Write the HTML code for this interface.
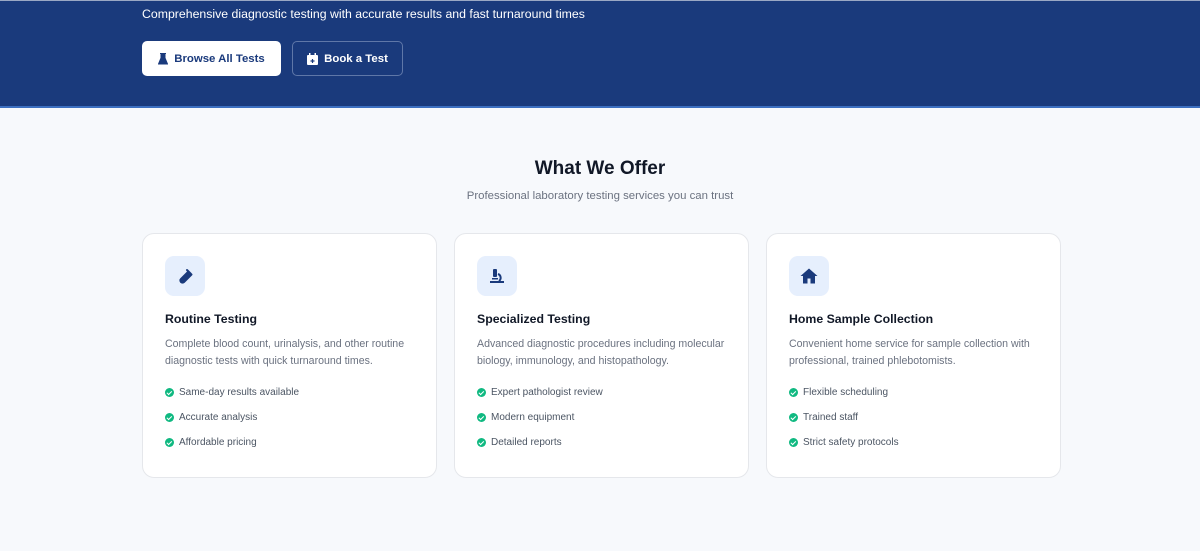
<!DOCTYPE html>
<html><head><meta charset="utf-8"><style>
*{margin:0;padding:0;box-sizing:border-box}
body{width:1200px;height:551px;overflow:hidden;background:#f7f9fc;font-family:"Liberation Sans",sans-serif}
.hero{position:absolute;left:0;top:0;width:1200px;height:108px;background:#1a3a7c;border-top:1px solid #9aa8c4;border-bottom:2px solid #3c6fc0}
.hero p{position:absolute;left:142px;top:6px;color:#fff;font-size:12.3px}
.btn{position:absolute;top:40px;height:35px;border-radius:5px;font-size:11.4px;font-weight:bold;display:flex;align-items:center;justify-content:center;gap:6px}
.b1{left:142px;width:139px;background:#fff;color:#1a3a7c}
.b2{left:292px;width:111px;border:1.5px solid #5f77a8;color:#fff}
h2{position:absolute;top:158px;width:1200px;text-align:center;font-size:19px;color:#111827}
.sub{position:absolute;top:190px;width:1200px;text-align:center;font-size:11.4px;color:#6b7280}
.card{position:absolute;top:233px;width:295px;height:245px;background:#fff;border:1px solid #e5e7eb;border-radius:12px}
.ic{position:absolute;left:22px;top:22px;width:40px;height:40px;border-radius:9px;background:#e6effd;display:flex;align-items:center;justify-content:center}
.card h3{position:absolute;left:22px;top:78px;font-size:12.3px;color:#111827}
.card .d{position:absolute;left:22px;top:102px;width:260px;font-size:10.6px;line-height:17px;color:#6b7280}
.card ul{position:absolute;left:22px;top:146px;list-style:none}
.card li{height:25px;font-size:10px;color:#4b5563;display:flex;align-items:center;gap:5px}
.ck{width:9px;height:9px;border-radius:50%;background:#10b981;display:inline-block;position:relative}
.ck:after{content:"";position:absolute;left:2.7px;top:1.6px;width:2px;height:3.5px;border:solid #fff;border-width:0 1.3px 1.3px 0;transform:rotate(45deg)}
</style></head><body>
<div class="hero"><p>Comprehensive diagnostic testing with accurate results and fast turnaround times</p>
<div class="btn b1"><svg width="10" height="12" viewBox="0 0 10 12"><path d="M2 0.5h6M3 1v4L0.5 11h9L7 5V1" fill="#1a3a7c" stroke="#1a3a7c"/></svg>Browse All Tests</div>
<div class="btn b2"><svg width="11" height="12" viewBox="0 0 11 12"><rect x="0" y="2" width="11" height="10" rx="1" fill="#fff"/><rect x="2" y="0" width="1.5" height="3" fill="#fff"/><rect x="7.5" y="0" width="1.5" height="3" fill="#fff"/><path d="M5.5 6v4M3.5 8h4" stroke="#1a3a7c" stroke-width="1.2"/></svg>Book a Test</div></div>
<h2>What We Offer</h2>
<div class="sub">Professional laboratory testing services you can trust</div>

<div class="card" style="left:142px"><div class="ic"><svg width="16" height="16" viewBox="0 0 16 16"><path d="M10 2l4 4M11.5 3.5L4 11a2 2 0 0 0 3 3l7.5-7.5" fill="#1a3a7c" stroke="#1a3a7c" stroke-width="2" stroke-linecap="round"/></svg></div>
<h3>Routine Testing</h3><div class="d">Complete blood count, urinalysis, and other routine diagnostic tests with quick turnaround times.</div>
<ul><li><span class="ck"></span>Same-day results available</li><li><span class="ck"></span>Accurate analysis</li><li><span class="ck"></span>Affordable pricing</li></ul></div>

<div class="card" style="left:454px"><div class="ic"><svg width="16" height="16" viewBox="0 0 16 16"><rect x="4" y="1" width="4" height="8" rx="1" fill="#1a3a7c"/><path d="M9 6a4 4 0 0 1 1 7" fill="none" stroke="#1a3a7c" stroke-width="2"/><rect x="3" y="10" width="6" height="1.5" fill="#1a3a7c"/><rect x="1" y="13" width="14" height="2" fill="#1a3a7c"/></svg></div>
<h3>Specialized Testing</h3><div class="d">Advanced diagnostic procedures including molecular biology, immunology, and histopathology.</div>
<ul><li><span class="ck"></span>Expert pathologist review</li><li><span class="ck"></span>Modern equipment</li><li><span class="ck"></span>Detailed reports</li></ul></div>

<div class="card" style="left:766px"><div class="ic"><svg width="18" height="16" viewBox="0 0 18 16"><path d="M9 0.5L0.5 8h2.5v7.5h4.5v-5h3v5h4.5V8h2.5z" fill="#1a3a7c"/></svg></div>
<h3>Home Sample Collection</h3><div class="d">Convenient home service for sample collection with professional, trained phlebotomists.</div>
<ul><li><span class="ck"></span>Flexible scheduling</li><li><span class="ck"></span>Trained staff</li><li><span class="ck"></span>Strict safety protocols</li></ul></div>
</body></html>
